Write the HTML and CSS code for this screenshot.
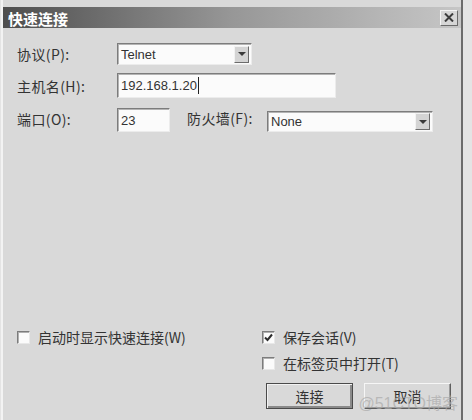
FILE: index.html
```html
<!DOCTYPE html>
<html lang="zh-CN">
<head>
  <meta charset="UTF-8">
  <meta name="viewport" content="width=device-width, initial-scale=1.0">
  <title>快速连接</title>
  <link rel="stylesheet" href="styles.css">
</head>
<body>

  <div class="dialog">
    <div class="titlebar">
      <span class="title">快速连接</span>
      <span class="close-btn">
        <svg width="10" height="9" viewBox="0 0 10 9">
          <path d="M1 0.5 L9 8.5 M9 0.5 L1 8.5" stroke="#3c3c3c" stroke-width="2" fill="none"/>
        </svg>
      </span>
    </div>

    <div class="content">
      <div class="form">
        <label class="field-label">协议(P):</label>
        <div class="select protocol">
          <span class="value">Telnet</span>
          <span class="drop-btn"></span>
        </div>

        <label class="field-label">主机名(H):</label>
        <div class="textbox host">
          <span class="value">192.168.1.20</span><span class="caret"></span>
        </div>

        <label class="field-label">端口(O):</label>
        <div class="port-row">
          <div class="textbox port"><span class="value">23</span></div>
          <label class="field-label fw-label">防火墙(F):</label>
          <div class="select firewall">
            <span class="value">None</span>
            <span class="drop-btn"></span>
          </div>
        </div>
      </div>

      <div class="options">
        <div class="check startup">
          <span class="box"></span>
          <span>启动时显示快速连接(W)</span>
        </div>
        <div class="check save">
          <span class="box">
            <svg width="9" height="9" viewBox="0 0 9 9">
              <path d="M1 4.5 L3.5 7 L8 1.5" stroke="#2c2c2c" stroke-width="2" fill="none"/>
            </svg>
          </span>
          <span>保存会话(V)</span>
        </div>
        <div class="check tab">
          <span class="box"></span>
          <span>在标签页中打开(T)</span>
        </div>
      </div>

      <div class="buttons">
        <button class="btn default">连接</button>
        <button class="btn">取消</button>
      </div>
    </div>

    <div class="watermark">@51CTO博客</div>
  </div>

</body>
</html>
```

FILE: styles.css
```css
body {
  margin: 0;
  background-color: #e4e4e4;
  font-family: "Noto Sans CJK SC", sans-serif;
  color: #333;
}

.dialog {
  position: relative;
  width: 462px;
  height: 420px;
  margin-left: 1px;
  padding-top: 7px;
  box-sizing: border-box;
  background-color: #d9d9d9;
  border-left: 2px solid #f3f3f3;
  border-right: 2px solid #6c6c6c;
}

/* title bar */
.titlebar {
  height: 21px;
  display: flex;
  align-items: center;
  justify-content: space-between;
  padding: 0 3px 0 5px;
  background: linear-gradient(to right, #4e4e4e, #979797 50%, #c6c6c6);
}

.title {
  font-size: 15px;
  font-weight: bold;
  color: #fff;
  line-height: 21px;
  padding-top: 2px;
}

.close-btn {
  width: 18px;
  height: 16px;
  box-sizing: border-box;
  display: flex;
  align-items: center;
  justify-content: center;
  background-color: #d6d6d6;
  border: 1px solid;
  border-color: #f4f4f4 #6a6a6a #6a6a6a #f4f4f4;
}

/* form */
.content {
  padding: 15px 0 0 14px;
}

.form {
  display: grid;
  grid-template-columns: 100px auto;
  grid-template-rows: 22px 25px 26px;
  row-gap: 8px;
}

.field-label {
  align-self: center;
  font-size: 14px;
  line-height: 16px;
  letter-spacing: 0.4px;
}

.textbox,
.select {
  box-sizing: border-box;
  display: flex;
  align-items: center;
  background-color: #fbfbfb;
  border: 1px solid;
  border-color: #7c7c7c #ececec #ececec #7c7c7c;
  box-shadow: inset 1px 1px 0 #b4b4b4;
  font-family: "Liberation Sans", Arial, sans-serif;
  font-size: 13px;
  padding-left: 3px;
}

.value {
  line-height: 15px;
}

.protocol {
  width: 135px;
}

.host {
  width: 219px;
}

.caret {
  width: 1px;
  height: 17px;
  margin-left: 1px;
  background-color: #222;
}

.port-row {
  display: flex;
  align-items: flex-end;
}

.port {
  width: 53px;
  height: 24px;
  align-items: flex-start;
  padding-top: 4px;
}

.fw-label {
  width: 76px;
  margin: 0 4px 3px 17px;
}

.firewall {
  width: 166px;
  height: 21px;
}

.select {
  justify-content: space-between;
  padding-right: 2px;
}

.drop-btn {
  width: 15px;
  height: 17px;
  box-sizing: border-box;
  display: flex;
  align-items: center;
  justify-content: center;
  background-color: #d4d4d4;
  border: 1px solid;
  border-color: #f2f2f2 #6c6c6c #6c6c6c #f2f2f2;
}

.drop-btn::after {
  content: "";
  border-left: 4px solid transparent;
  border-right: 4px solid transparent;
  border-top: 4px solid #3a3a3a;
}

/* check boxes */
.options {
  display: grid;
  grid-template-columns: 245px auto;
  grid-template-rows: 14px 14px;
  row-gap: 12px;
  margin-top: 198px;
}

.check {
  display: flex;
  align-items: center;
  gap: 8px;
  font-size: 14px;
  line-height: 14px;
}

.box {
  width: 13px;
  height: 13px;
  box-sizing: border-box;
  display: flex;
  align-items: center;
  justify-content: center;
  background-color: #fbfbfb;
  border: 1px solid;
  border-color: #7c7c7c #e8e8e8 #e8e8e8 #7c7c7c;
  box-shadow: inset 1px 1px 0 #b0b0b0;
}

.save {
  grid-column: 2;
}

.tab {
  grid-column: 2;
  grid-row: 2;
}

/* buttons */
.buttons {
  display: flex;
  gap: 11px;
  margin: 13px 0 0 249px;
}

.btn {
  width: 87px;
  height: 26px;
  padding: 0;
  font-family: "Noto Sans CJK SC", sans-serif;
  font-size: 14px;
  color: #333;
  background-color: #d9d9d9;
  border: 1px solid;
  border-color: #f6f6f6 #5e5e5e #5e5e5e #f6f6f6;
  box-shadow: inset -1px -1px 0 #9a9a9a;
}

.btn.default {
  border-color: #4a4a4a;
  box-shadow: inset 1px 1px 0 #f2f2f2, inset -2px -2px 0 #8a8a8a;
}

.watermark {
  position: absolute;
  right: 3px;
  top: 390px;
  font-family: "Liberation Sans", "Noto Sans CJK SC", sans-serif;
  font-size: 16px;
  color: rgba(170, 170, 170, 0.7);
}
```
